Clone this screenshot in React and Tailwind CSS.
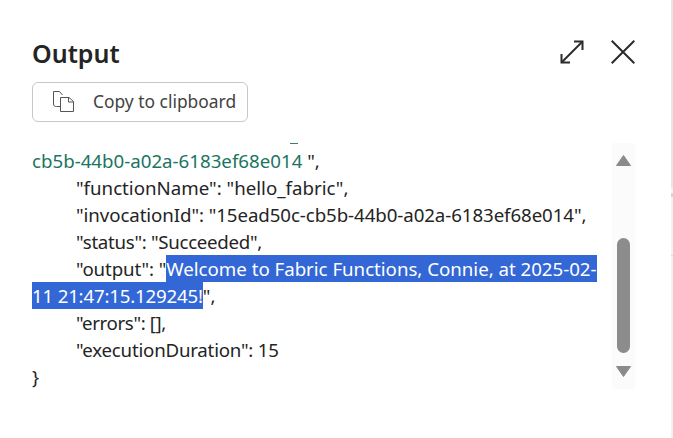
const font = { fontFamily: '"Noto Sans", sans-serif' };

function CopyIcon() {
  return (
    <svg width="21" height="21" viewBox="0 0 21 21" fill="none" stroke="#555" strokeWidth="1">
      <path d="M7 15.5H3.5C1.5 15.5 0.5 14.5 0.5 13V0.5H6.5L9.5 4" />
      <path d="M7.5 6.5V20.5H20.5V10.5L16 6.5H7.5Z" />
      <path d="M15.5 6.5V11H20.5" />
    </svg>
  );
}

function ExpandIcon() {
  return (
    <svg width="24" height="24" viewBox="0 0 24 24" fill="none" stroke="#2b2b2b" strokeWidth="2">
      <path d="M1.5 22.5L22.5 1.5" />
      <path d="M14 1.5H22.5V10" />
      <path d="M1.5 14V22.5H10" />
    </svg>
  );
}

function CloseIcon() {
  return (
    <svg width="24" height="24" viewBox="0 0 24 24" fill="none" stroke="#2b2b2b" strokeWidth="2">
      <path d="M0.7 0.7L23.3 23.3M23.3 0.7L0.7 23.3" />
    </svg>
  );
}

function Scrollbar() {
  return (
    <div className="w-[23px] h-[246px] bg-[#fbfbfb] flex flex-col items-center shrink-0">
      <svg className="mt-[12px]" width="15" height="11" viewBox="0 0 15 11">
        <path d="M7.5 0.5L14.5 10.5H0.5Z" fill="#8a8a8a" stroke="#8a8a8a" strokeLinejoin="round" />
      </svg>
      <div className="mt-[72px] w-[13px] h-[115px] rounded-full bg-[#8c8c8c]" />
      <svg className="mt-[13px]" width="15" height="11" viewBox="0 0 15 11">
        <path d="M0.5 0.5H14.5L7.5 10.5Z" fill="#8a8a8a" stroke="#8a8a8a" strokeLinejoin="round" />
      </svg>
    </div>
  );
}

const indent = "pl-[44px]";
const picked = "inline-block h-[27px] bg-[#3367d6] text-white";

export default function App() {
  return (
    <div className="w-[673px] h-[438px] bg-white overflow-hidden flex" style={font}>
      <div className="w-[671px] pl-[32px] pr-[36px]">
        <div className="flex items-start justify-between pt-[35px] h-[82px]">
          <h1 className="text-[25px] font-semibold leading-[36px] text-[#242424]">Output</h1>
          <div className="flex items-center gap-[27px] mt-[5px]">
            <ExpandIcon />
            <CloseIcon />
          </div>
        </div>
        <button className="w-[216px] h-[40px] flex items-center pl-[20px] pb-[1px] border border-[#c8c8c8] rounded-[6px] text-[17.4px] text-[#424242]">
          <CopyIcon />
          <span className="ml-[19px]">Copy to clipboard</span>
        </button>
        <div className="flex justify-between mt-[21px]">
          <div className="h-[246px] w-[570px] overflow-hidden text-[18.7px] leading-[27px] text-[#242424] whitespace-nowrap">
            <div className="ml-[258px] w-[8px] h-px bg-[#3a7f6e]" />
            <div className="mt-[3px]">
              <span className="text-[#1a7560]">cb5b-44b0-a02a-6183ef68e014 </span>",
            </div>
            <div className={indent}>"functionName": "hello_fabric",</div>
            <div className={`${indent} tracking-[-0.08px]`}>"invocationId": "15ead50c-cb5b-44b0-a02a-6183ef68e014",</div>
            <div className={`${indent} tracking-[-0.3px]`}>"status": "Succeeded",</div>
            <div className={indent}>
              <span className="tracking-[-0.1px]">"output": "</span>
              <span className={`${picked} tracking-[-0.02px]`}>Welcome to Fabric Functions, Connie, at 2025-02-</span>
            </div>
            <div>
              <span className={`${picked} tracking-[-0.2px]`}>11 21:47:15.129245!</span>",
            </div>
            <div className={`${indent} tracking-[-0.38px]`}>"errors": [],</div>
            <div className={`${indent} tracking-[-0.22px]`}>"executionDuration": 15</div>
            <div>{"}"}</div>
          </div>
          <Scrollbar />
        </div>
      </div>
      <div className="w-[2px] h-full flex flex-col">
        <div className="h-[188px] bg-[#e6e6e6]" />
        <div className="h-[5px] bg-[#f5f5f5]" />
        <div className="h-[4px] bg-[#d6d6d6]" />
        <div className="h-[58px] bg-[#f2f2f2]" />
        <div className="h-px bg-[#dddddd]" />
        <div className="flex-1 bg-[#f2f2f2]" />
      </div>
    </div>
  );
}
